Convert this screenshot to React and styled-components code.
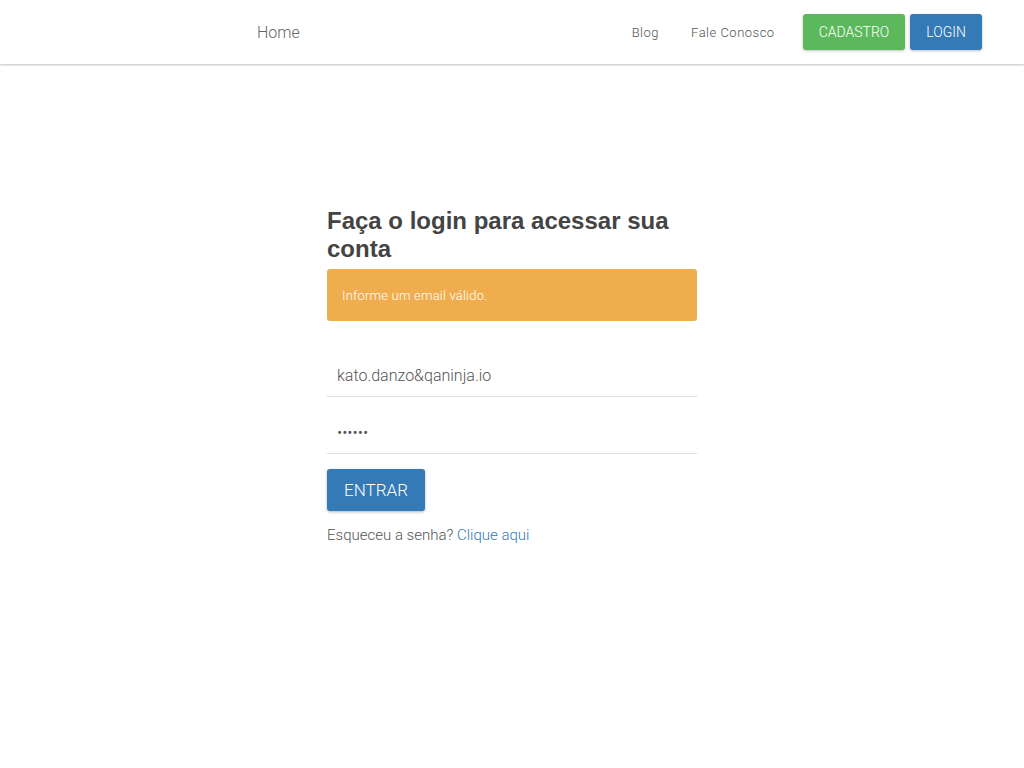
import React from 'react';
import styled, { createGlobalStyle } from 'styled-components';

const Global = createGlobalStyle`
  body {
    margin: 0;
    background: #fff;
    font-family: Roboto, "Liberation Sans", Arial, sans-serif;
    font-weight: 300;
    color: #666;
  }
`;

const Navbar = styled.nav`
  height: 64px;
  background: #fff;
  box-shadow: 0 1px 2px rgba(0, 0, 0, 0.25);
  display: flex;
  align-items: center;
  padding: 0 42px 0 257px;
`;

const Brand = styled.a`
  font-size: 16px;
  color: #666;
  text-decoration: none;
  margin-right: auto;
`;

const NavLink = styled.a`
  font-size: 13px;
  letter-spacing: 0.5px;
  color: #555;
  text-decoration: none;
  font-weight: 300;
  margin-right: ${(p) => p.gap || 0}px;
`;

const NavButton = styled.button`
  height: 36px;
  padding: 0 ${(p) => p.pad || 16}px;
  border: none;
  border-radius: 3px;
  background: ${(p) => p.bg};
  color: #fff;
  font-family: inherit;
  font-weight: 300;
  font-size: 14px;
  box-shadow: 0 1px 3px rgba(0, 0, 0, 0.25);
  margin-left: ${(p) => p.ml || 0}px;
`;

const Main = styled.main`
  display: flex;
  justify-content: center;
  padding-top: 143px;
`;

const Form = styled.div`
  width: 370px;
  display: flex;
  flex-direction: column;
`;

const Title = styled.h3`
  margin: 0 0 6px;
  font-family: "Liberation Sans", Arial, sans-serif;
  font-weight: 700;
  font-size: 24px;
  line-height: 28px;
  color: #444;
`;

const Alert = styled.div`
  background: #f0ad4e;
  border-radius: 3px;
  height: 52px;
  display: flex;
  align-items: center;
  padding: 0 15px;
  color: #fff;
  font-size: 13px;
  font-weight: 300;
  letter-spacing: 0.2px;
  margin-bottom: 33px;
`;

const Field = styled.input`
  border: none;
  border-bottom: 1px solid #ddd;
  height: 42px;
  padding: 0 10px;
  font-family: inherit;
  font-weight: 300;
  font-size: 16px;
  color: #555;
  margin-bottom: 14px;
  outline: none;
`;

const Submit = styled.button`
  align-self: flex-start;
  width: 98px;
  height: 42px;
  border: none;
  border-radius: 3px;
  background: #337ab7;
  color: #fff;
  font-family: inherit;
  font-weight: 300;
  font-size: 17px;
  box-shadow: 0 1px 3px rgba(0, 0, 0, 0.3);
  margin-top: 1px;
`;

const Forgot = styled.p`
  margin: 15px 0 0;
  font-size: 15px;
  color: #555;
  a {
    color: #337ab7;
    text-decoration: none;
  }
`;

export default function App() {
  return (
    <>
      <Global />
      <Navbar>
        <Brand href="#">Home</Brand>
        <NavLink href="#" gap={32}>Blog</NavLink>
        <NavLink href="#" gap={28}>Fale Conosco</NavLink>
        <NavButton bg="#5cb85c">CADASTRO</NavButton>
        <NavButton bg="#337ab7" ml={5}>LOGIN</NavButton>
      </Navbar>
      <Main>
        <Form>
          <Title>Faça o login para acessar sua conta</Title>
          <Alert>Informe um email válido.</Alert>
          <Field type="text" defaultValue="kato.danzo&qaninja.io" />
          <Field type="password" defaultValue="123456" />
          <Submit>ENTRAR</Submit>
          <Forgot>
            Esqueceu a senha? <a href="#">Clique aqui</a>
          </Forgot>
        </Form>
      </Main>
    </>
  );
}
